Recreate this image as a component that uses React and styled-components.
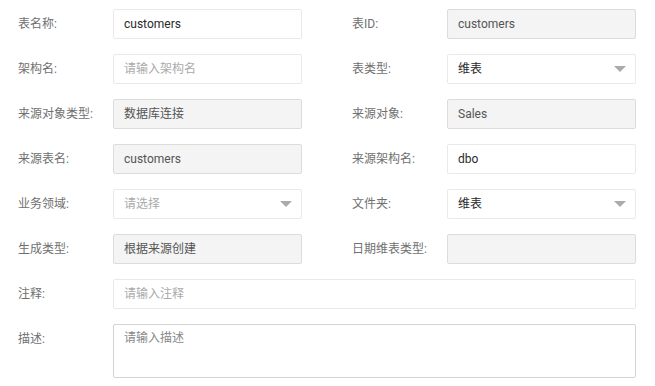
import React from 'react';
import styled, { createGlobalStyle } from 'styled-components';

const GlobalStyle = createGlobalStyle`
  html, body {
    margin: 0;
    padding: 0;
    background: #fff;
  }
  body {
    font-family: Roboto, "Noto Sans CJK SC", sans-serif;
    font-size: 12px;
    color: #333;
  }
`;

const Form = styled.div`
  display: grid;
  grid-template-columns: 284px 284px;
  column-gap: 50px;
  row-gap: 15px;
  padding: 9px 0 0 18px;
  width: 618px;
`;

const Row = styled.div`
  display: flex;
  align-items: ${props => (props.top ? 'flex-start' : 'center')};
  grid-column: ${props => (props.wide ? '1 / span 2' : 'auto')};
`;

const Label = styled.label`
  width: 95px;
  flex-shrink: 0;
  color: #707070;
  font-size: 12px;
  line-height: 16px;
  padding-top: ${props => (props.top ? '7px' : '0')};
`;

const Field = styled.div`
  flex: 1;
  height: ${props => (props.tall ? '54px' : '30px')};
  box-sizing: border-box;
  border: 1px solid ${props => (props.disabled ? '#dcdcdc' : props.tall ? '#d4d4d4' : '#e9e9e9')};
  border-radius: 2px;
  background: ${props => (props.disabled ? '#f4f4f4' : '#fff')};
  display: flex;
  align-items: ${props => (props.tall ? 'flex-start' : 'center')};
  padding: ${props => (props.tall ? '5px 10px' : '0 10px')};
  color: ${props =>
    props.placeholder ? (props.tall ? '#888' : '#aaa') : props.disabled ? '#555' : '#2a2a2a'};
  line-height: 16px;
`;

const Value = styled.span`
  flex: 1;
`;

const Caret = styled.span`
  width: 0;
  height: 0;
  border-left: 6px solid transparent;
  border-right: 6px solid transparent;
  border-top: 6px solid #ababab;
  margin-right: -1px;
`;

const Item = ({ label, value, disabled, placeholder, select, wide, tall }) => (
  <Row wide={wide} top={tall}>
    <Label top={tall}>{label}</Label>
    <Field disabled={disabled} placeholder={placeholder} tall={tall}>
      <Value>{value}</Value>
      {select && <Caret />}
    </Field>
  </Row>
);

export default function App() {
  return (
    <>
      <GlobalStyle />
      <Form>
        <Item label="表名称:" value="customers" />
        <Item label="表ID:" value="customers" disabled />
        <Item label="架构名:" value="请输入架构名" placeholder />
        <Item label="表类型:" value="维表" select />
        <Item label="来源对象类型:" value="数据库连接" disabled />
        <Item label="来源对象:" value="Sales" disabled />
        <Item label="来源表名:" value="customers" disabled />
        <Item label="来源架构名:" value="dbo" />
        <Item label="业务领域:" value="请选择" placeholder select />
        <Item label="文件夹:" value="维表" select />
        <Item label="生成类型:" value="根据来源创建" disabled />
        <Item label="日期维表类型:" value="" disabled />
        <Item label="注释:" value="请输入注释" placeholder wide />
        <Item label="描述:" value="请输入描述" placeholder wide tall />
      </Form>
    </>
  );
}
